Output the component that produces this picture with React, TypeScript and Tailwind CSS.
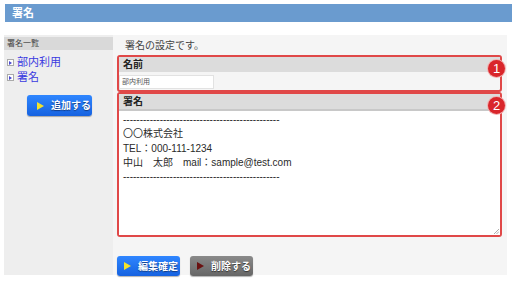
import React from "react";

const FONT = '"Liberation Sans", "Noto Sans CJK JP", sans-serif';

function Badge({ n }: { n: string }) {
  return (
    <div className="absolute right-[-5px] top-[3px] flex h-[17px] w-[17px] items-center justify-center rounded-full bg-[#d9262b] text-[13px] leading-none text-white shadow-[0_0_0_1px_#f2b0b0]">
      {n}
    </div>
  );
}

function Tri({ color }: { color: string }) {
  return (
    <svg width="7" height="8" viewBox="0 0 7 8" className="mr-[7px] shrink-0">
      <polygon points="0,0 7,4 0,8" fill={color} />
    </svg>
  );
}

const DASH = "-----------------------------------------------";

export default function App() {
  return (
    <div className="h-[283px] w-[512px] overflow-hidden bg-white" style={{ fontFamily: FONT }}>
      <div className="ml-[5px] mt-[4px] flex h-[18px] items-center bg-[#6a9bcf] pl-[7px] text-[11px] font-bold text-white">
        署名
      </div>
      <div className="ml-[4px] mr-[5px] mt-[13px] flex h-[240px] bg-[#f5f5f5]">
        <div className="w-[109px] bg-[#eeeeee] pt-[2px]">
          <div className="flex h-[13px] items-center bg-[#d9d9d9] pl-[3px] text-[8px] text-[#444]">署名一覧</div>
          <div className="mt-[6px] flex flex-col gap-[2px] pl-[3px] text-[11px] leading-[13px] text-[#3a3ae0]">
            <div className="flex items-center">
              <span className="mr-[3px] flex h-[7px] w-[7px] items-center justify-center border border-[#aaa] bg-white">
                <svg width="3" height="4" viewBox="0 0 3 4"><polygon points="0,0 3,2 0,4" fill="#4a4ad0" /></svg>
              </span>
              部内利用
            </div>
            <div className="flex items-center">
              <span className="mr-[3px] flex h-[7px] w-[7px] items-center justify-center border border-[#aaa] bg-white">
                <svg width="3" height="4" viewBox="0 0 3 4"><polygon points="0,0 3,2 0,4" fill="#4a4ad0" /></svg>
              </span>
              署名
            </div>
          </div>
          <div className="ml-[23px] mt-[11px] flex h-[21px] w-[65px] items-center whitespace-nowrap rounded-[3px] bg-gradient-to-b from-[#2f86ff] to-[#1662e0] pl-[10px] text-[10px] font-bold text-white shadow-[0_1px_1px_rgba(0,0,0,0.3)] [text-shadow:0_1px_1px_#123a80]">
            <Tri color="#f2e22a" />
            追加する
          </div>
        </div>
        <div className="flex-1 pl-[4px] pr-[5px]">
          <div className="mt-[5px] pl-[8px] text-[10px] leading-[12px] text-[#444]">署名の設定です。</div>
          <div className="relative mt-[3px] h-[37px] rounded-[3px] border-2 border-[#e04848]">
            <div className="flex h-[15px] items-center bg-[#dcdcdc] pl-[4px] text-[10px] font-bold text-[#222]">名前</div>
            <div className="mt-[3px] flex h-[14px] w-[95px] items-center border border-[#e2e2e2] bg-white pl-[2px] text-[7px] text-[#555]">部内利用</div>
            <Badge n="1" />
          </div>
          <div className="relative h-[145px] rounded-[3px] border-2 border-[#e04848]">
            <div className="flex h-[17px] items-center border-b-2 border-[#c8c8c8] bg-[#dcdcdc] pl-[4px] text-[10px] font-bold text-[#222]">署名</div>
            <div className="relative h-[124px] bg-white pl-[4px] pt-[2px] text-[10px] leading-[14.3px] text-[#2a2a2a]">
              <div className="whitespace-nowrap">{DASH}</div>
              <div>〇〇株式会社</div>
              <div>TEL：000-111-1234</div>
              <div>中山　太郎　mail：sample@test.com</div>
              <div className="whitespace-nowrap">{DASH}</div>
              <svg className="absolute bottom-[1px] right-[1px]" width="6" height="6" viewBox="0 0 6 6">
                <line x1="1" y1="6" x2="6" y2="1" stroke="#999" strokeWidth="0.8" />
                <line x1="3.5" y1="6" x2="6" y2="3.5" stroke="#999" strokeWidth="0.8" />
              </svg>
            </div>
            <Badge n="2" />
          </div>
          <div className="mt-[19px] flex gap-[10px]">
            <div className="flex h-[20px] w-[63px] items-center whitespace-nowrap rounded-[3px] bg-gradient-to-b from-[#2f86ff] to-[#1662e0] pl-[7px] text-[10px] font-bold text-white shadow-[0_1px_1px_rgba(0,0,0,0.3)] [text-shadow:0_1px_1px_#123a80]">
              <Tri color="#f2e22a" />
              編集確定
            </div>
            <div className="flex h-[20px] w-[63px] items-center whitespace-nowrap rounded-[3px] bg-gradient-to-b from-[#8a8a8a] to-[#666] pl-[7px] text-[10px] font-bold text-white shadow-[0_1px_1px_rgba(0,0,0,0.3)] [text-shadow:0_1px_1px_#333]">
              <Tri color="#6a1010" />
              削除する
            </div>
          </div>
        </div>
      </div>
    </div>
  );
}
